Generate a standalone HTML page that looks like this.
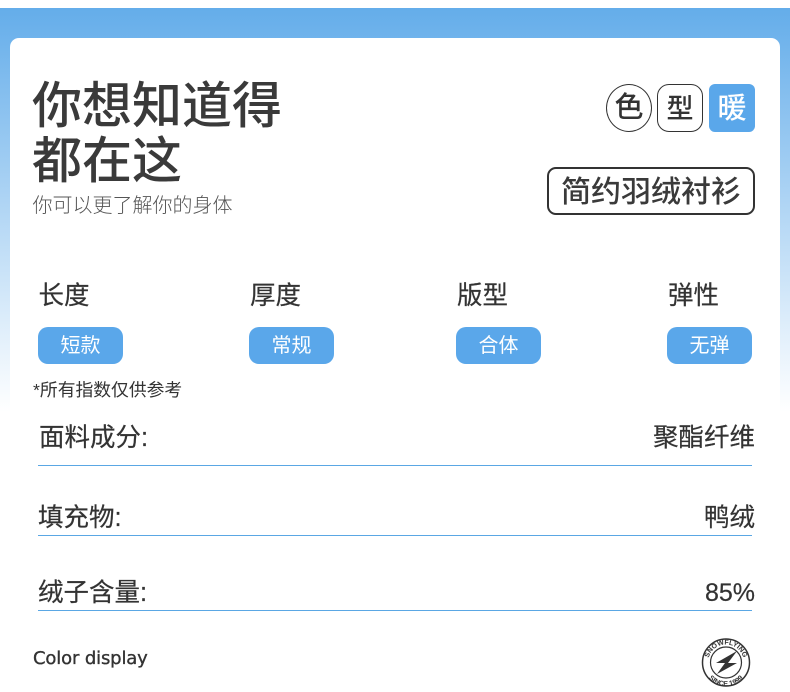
<!DOCTYPE html>
<html lang="zh"><head><meta charset="utf-8"><style>
html,body{margin:0;padding:0;background:#fff}
#p{position:relative;width:790px;height:692px;overflow:hidden;background:#fff;font-family:"Liberation Sans","Noto Sans CJK SC",sans-serif;color:#333}
#p div{position:absolute;white-space:nowrap}
.t{line-height:30px;height:30px}
.m{font-weight:500}
.s{-webkit-text-stroke:.2px #333}
.b{width:85px;height:37px;top:327px;border-radius:10px;background:#5AA7EA;color:#fff;font-size:20px;line-height:39px;text-align:center}
.h{font-size:25.500px;top:281px}
.l{left:38px;width:714px;height:1px;background:#5AA7E4}
.r{font-size:25.500px;right:35px}
</style></head><body><div id="p">
<div style="left:0;top:8px;width:790px;height:404px;background:linear-gradient(#64ADEA,#fff)"></div>
<div style="left:10px;top:38px;width:770px;height:654px;background:#fff;border-radius:9px 9px 0 0"></div>
<div class="m" style="left:32px;top:79px;font-size:50px;line-height:55px;color:#3a3a3a">你想知道得<br>都在这</div>
<div style="left:32.500px;top:191px;font-size:20px;line-height:30px;color:#555;font-weight:300">你可以更了解你的身体</div>
<div class="m" style="left:606px;top:84px;width:44px;height:46px;border:1px solid #333;border-radius:50%;font-size:29px;line-height:47px;text-align:center">色</div>
<div class="m" style="left:657px;top:84px;width:44px;height:46px;border:1px solid #333;border-radius:12px;font-size:27px;line-height:49px;text-align:center">型</div>
<div class="m" style="left:709px;top:84px;width:46px;height:48px;border-radius:6px;background:#5AA7EA;color:#fff;font-size:29px;line-height:51px;text-align:center">暖</div>
<div class="m" style="left:547px;top:167px;width:204px;height:44px;border:2px solid #333;border-radius:9px;font-size:30px;line-height:48px;text-align:center;color:#3a3a3a">简约羽绒衬衫</div>
<div class="h t s" style="left:38.500px">长度</div><div class="h t s" style="left:250px">厚度</div><div class="h t s" style="left:457px">版型</div><div class="h t s" style="left:668px">弹性</div>
<div class="b" style="left:38px">短款</div><div class="b" style="left:249px">常规</div><div class="b" style="left:456px">合体</div><div class="b" style="left:667px">无弹</div>
<div class="t" style="left:33px;top:375px;font-size:17.800px">*所有指数仅供参考</div>
<div class="t s" style="left:39px;top:423px;font-size:25.500px">面料成分:</div><div class="t r s" style="top:423px">聚酯纤维</div><div class="l" style="top:465px"></div>
<div class="t s" style="left:38px;top:503px;font-size:25.500px">填充物:</div><div class="t r s" style="top:503px">鸭绒</div><div class="l" style="top:535px"></div>
<div class="t s" style="left:38px;top:578px;font-size:25.500px">绒子含量:</div><div class="t r s" style="top:578px;font-size:25px">85%</div><div class="l" style="top:610px"></div>
<div class="t" style="left:33px;top:644px;font-family:'DejaVu Sans',sans-serif;letter-spacing:-.15px;font-size:18px;-webkit-text-stroke:.35px #333">Color display</div>
<svg style="position:absolute;left:700px;top:636px" width="52" height="52" viewBox="0 0 52 52">
<circle cx="26" cy="26.500" r="23.500" fill="none" stroke="#333" stroke-width="1.500"/>
<circle cx="26" cy="26.500" r="15.500" fill="none" stroke="#333" stroke-width="1.200"/>
<path d="M37 15L16 27H25L17 38L37 27H28Z" fill="#333"/>
<defs><path id="a" d="M8 26.500A18 18 0 0 1 44 26.500"/><path id="c" d="M3 27A23 23 0 0 0 49 27"/></defs>
<text font-size="7" font-weight="700" fill="#333" font-family="Liberation Sans"><textPath href="#a" startOffset="50%" text-anchor="middle">SNOWFLYING</textPath></text>
<text font-size="7" font-weight="700" fill="#333" font-family="Liberation Sans"><textPath href="#c" startOffset="50%" text-anchor="middle">SINCE 1999</textPath></text>
</svg>
</div></body></html>
